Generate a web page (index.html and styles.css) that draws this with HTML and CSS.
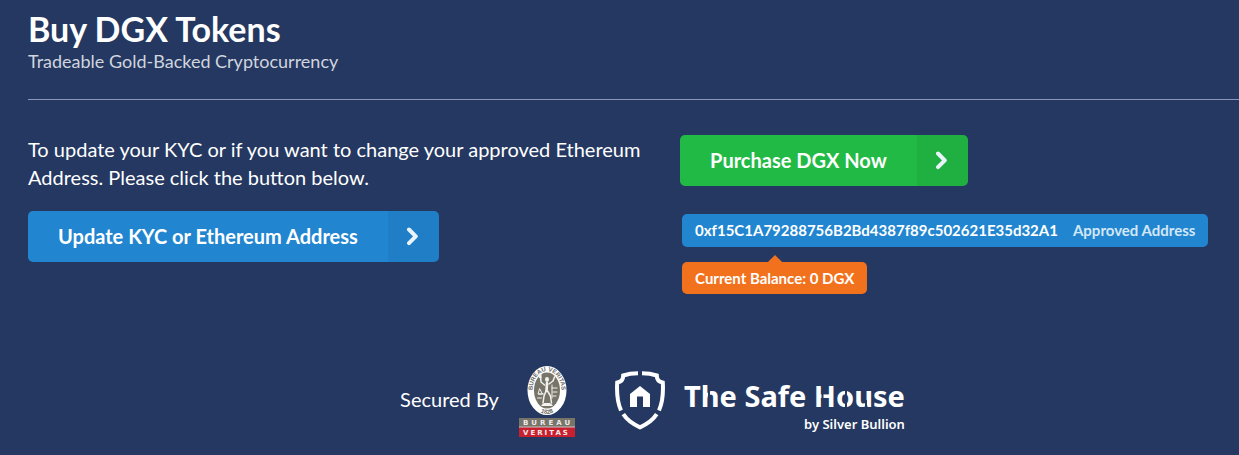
FILE: index.html
```html
<!DOCTYPE html>
<html lang="en">
<head>
<meta charset="utf-8">
<meta name="viewport" content="width=device-width, initial-scale=1">
<title>Buy DGX Tokens</title>
<link rel="stylesheet" href="styles.css">
</head>
<body>
<main class="page">
  <header class="header">
    <h1 class="title">Buy DGX Tokens</h1>
    <p class="subtitle">Tradeable Gold-Backed Cryptocurrency</p>
  </header>
  <div class="columns">
    <section class="kyc">
      <p class="intro">To update your KYC or if you want to change your approved Ethereum Address. Please click the button below.</p>
      <button class="button blue" type="button">
        <span class="button-text">Update KYC or Ethereum Address</span>
        <span class="button-icon"><svg class="chevron" viewBox="0 0 14 20" aria-hidden="true"><path d="M3 2.500 9.800 9.300 3 16.100"/></svg></span>
      </button>
    </section>
    <section class="purchase">
      <button class="button green" type="button">
        <span class="button-text">Purchase DGX Now</span>
        <span class="button-icon"><svg class="chevron" viewBox="0 0 14 20" aria-hidden="true"><path d="M3 2.500 9.800 9.300 3 16.100"/></svg></span>
      </button>
      <div class="labels">
        <div class="label blue">0xf15C1A79288756B2Bd4387f89c502621E35d32A1<span class="detail">Approved Address</span></div>
        <div class="label orange pointing">Current Balance: 0 DGX</div>
      </div>
    </section>
  </div>
  <footer class="secured">
    <span class="secured-text">Secured By</span>
    <svg class="bureau" viewBox="0 0 57 71" role="img" aria-label="Bureau Veritas">
      <defs>
        <path id="ring-top" d="M15.300 34A14.500 19.500 0 1 1 40.700 34"/>
        <path id="ring-bottom" d="M14.300 40A18.300 23.300 0 0 0 41.700 40"/>
      </defs>
      <ellipse cx="28" cy="24.500" rx="19.500" ry="24.500" fill="#fff"/>
      <ellipse cx="28" cy="24.500" rx="13" ry="18" fill="#777469"/>
      <text class="ring" font-size="6"><textPath href="#ring-top" startOffset="50%" text-anchor="middle">BUREAU VERITAS</textPath></text>
      <text class="ring" font-size="6"><textPath href="#ring-bottom" startOffset="50%" text-anchor="middle">1828</textPath></text>
      <g fill="none" stroke="#f3f2ee" stroke-linecap="round" stroke-linejoin="round">
        <path stroke-width="2.600" d="M28 17 27.500 25"/>
        <path stroke-width="1.500" d="M25.500 19 22 16 21.500 10M30 18l4-3 1.500-4M27 25l-2 5-1 7M28.500 25l3 5 1 7"/>
        <path stroke-width="1" d="M19.500 28h5M20.500 23l-1.500 5h4zM33 22h5M34 26h4M34 30h3M23 39q5-3 10 0M33 19v13M18.500 32h4"/>
      </g>
      <ellipse cx="28" cy="13.500" rx="2" ry="2.400" fill="#f3f2ee"/>
      <path d="M20 8h2.500v4H20zM25 37h6l3 3H22z" fill="#f3f2ee"/>
      <path d="M0 52h56v9H0z" fill="#777469"/>
      <path d="M0 61h56v10H0z" fill="#c9202f"/>
      <path d="M0 61h56" stroke="#c9c5c5" stroke-width="1"/>
      <text class="bar-text bureau-word" x="4" y="59">BUREAU</text>
      <text class="bar-text veritas-word" x="4" y="69">VERITAS</text>
    </svg>
    <div class="safe">
      <svg class="shield" viewBox="0 0 50 60" aria-hidden="true">
        <path d="M23 2.200C18.500 2.200 13.500 2.700 8.200 4.500 8.300 8.500 6 11 2.200 11.600 1.600 22 2.400 31.500 6 39.500M27 2.200C31.500 2.200 36.500 2.700 41.800 4.500 41.700 8.500 44 11 47.800 11.600 48.400 22 47.600 31.500 44 39.500M8.300 43.200C12 49 17.500 53 25 56.300 32.500 53 38 49 41.700 43.200" fill="none" stroke="#fff" stroke-width="4"/>
        <path d="M25 15 35 23V36H28V25.500H22V36H15V23z" fill="#fff"/>
      </svg>
      <div class="safe-words">
        <svg class="safe-name" viewBox="0 0 224 36">
          <text x="1" y="28">The Safe House</text>
          <path class="stencil" d="M26 11v8M139.500 12v12M163 10v6M163 24v6M183 21v8"/>
        </svg>
        <span class="safe-by">by Silver Bullion</span>
      </div>
    </div>
  </footer>
</main>
</body>
</html>
```
FILE: styles.css
```css
* { box-sizing: border-box; }

body {
  margin: 0;
  background: #243861;
  color: #fff;
  font-family: Lato, sans-serif;
  font-size: 20px;
  line-height: 28px;
}

.page { padding: 8px 0 16px 28px; }

.header {
  padding-bottom: 27px;
  border-bottom: 1px solid #8998b7;
}

.title {
  margin: 0;
  font-size: 34px;
  line-height: 42px;
  font-weight: 700;
}

.subtitle {
  margin: 0;
  font-size: 18px;
  line-height: 22px;
  color: #d0d5df;
}

.columns {
  display: grid;
  grid-template-columns: minmax(0, 7fr) minmax(0, 6fr);
  padding-top: 35px;
}

.intro { margin: 0 28px 20px 0; }

.button {
  display: inline-flex;
  padding: 0;
  border: 0;
  border-radius: 5px;
  overflow: hidden;
  color: #fff;
  font: 700 20px/51px Lato, sans-serif;
  cursor: pointer;
}

.button-text { padding: 0 30px; }

.button-icon {
  display: flex;
  align-items: center;
  justify-content: center;
  width: 51px;
  background: rgba(0, 0, 0, 0.05);
}

.chevron {
  width: 14px;
  height: 20px;
  fill: none;
  stroke: #e8f3fa;
  stroke-width: 4;
  stroke-linecap: round;
  stroke-linejoin: round;
}

.blue { background: #2185d0; }
.green { background: #21ba45; }
.orange { background: #f2711c; }

.labels {
  display: flex;
  flex-direction: column;
  align-items: flex-start;
  gap: 15px;
  padding: 28px 0 0 2px;
}

.label {
  position: relative;
  padding: 0 13px;
  border-radius: 5px;
  font-size: 15px;
  line-height: 33px;
  font-weight: 700;
}

.detail {
  margin-left: 15px;
  color: #d3e7f6;
}

.pointing { line-height: 32px; }

.pointing::before {
  content: "";
  position: absolute;
  top: -5px;
  left: 50%;
  width: 10px;
  height: 10px;
  margin-left: -5px;
  background: inherit;
  transform: rotate(45deg);
}

.secured {
  display: flex;
  align-items: flex-start;
  justify-content: center;
  padding: 72px 0 0 40px;
}

.secured-text { padding: 19px 20px 0 0; }

.bureau {
  width: 57px;
  height: 71px;
}

.ring {
  font-family: "Liberation Sans", sans-serif;
  font-weight: 700;
  fill: #68665f;
}

.bar-text {
  font-family: "DejaVu Sans", sans-serif;
  font-size: 7px;
  font-weight: 700;
  fill: #eeebea;
}

.bureau-word { letter-spacing: 3px; }
.veritas-word { letter-spacing: 2px; }

.safe {
  display: flex;
  gap: 18px;
  padding: 5px 0 0 39px;
}

.shield {
  width: 50px;
  height: 60px;
}

.safe-words {
  display: flex;
  flex-direction: column;
  align-items: flex-end;
  padding-top: 8px;
  font-family: "Noto Sans", sans-serif;
  font-weight: 700;
}

.safe-name {
  width: 224px;
  height: 36px;
  overflow: visible;
  font-size: 29px;
  fill: #fff;
}

.stencil {
  stroke: #243861;
  stroke-width: 2;
}

.safe-by {
  padding-right: 2px;
  font-size: 13px;
  line-height: 18px;
  font-weight: 600;
}
```
